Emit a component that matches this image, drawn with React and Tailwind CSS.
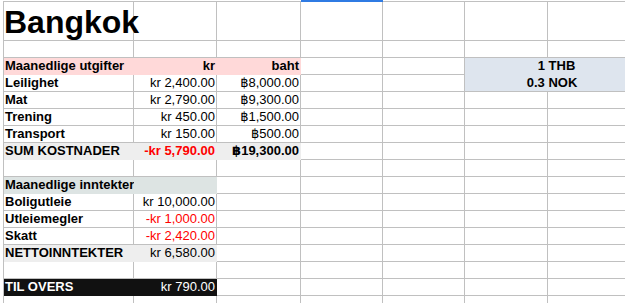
import React from 'react';

// ── helpers ──────────────────────────────────────────────────────────────────

const GRID = 'border-[#c0c0c0]';

const COL_W = [
  'w-[130px]',
  'w-[83px]',
  'w-[84px]',
  'w-[82px]',
  'w-[82px]',
  'w-[83px]',
  'w-[82px]',
];

const FILLS = {
  pink: 'bg-[#ffd9d9] border-[#ffd9d9]',
  gray: 'bg-[#eeeeee] border-[#eeeeee]',
  teal: 'bg-[#dde4e3] border-[#dde4e3]',
  black: 'bg-[#111111] border-[#111111] text-white',
  blue: 'bg-[#dee5ee] border-[#dee5ee]',
};

const ROWS = [
  { cells: [['Maanedlige utgifter', 'b'], ['kr', 'b r'], ['baht', 'b r']], fill: 'pink', span: 3, thb: '1 THB' },
  { cells: [['Leilighet', 'b'], ['kr 2,400.00', 'r'], ['฿8,000.00', 'r']], thb: '0.3 NOK' },
  { cells: [['Mat', 'b'], ['kr 2,790.00', 'r'], ['฿9,300.00', 'r']] },
  { cells: [['Trening', 'b'], ['kr 450.00', 'r'], ['฿1,500.00', 'r']] },
  { cells: [['Transport', 'b'], ['kr 150.00', 'r'], ['฿500.00', 'r']] },
  { cells: [['SUM KOSTNADER', 'b'], ['-kr 5,790.00', 'b r red'], ['฿19,300.00', 'b r']], fill: 'gray', span: 3 },
  { cells: [] },
  { cells: [['Maanedlige inntekter', 'b']], fill: 'teal', span: 2 },
  { cells: [['Boligutleie', 'b'], ['kr 10,000.00', 'r']] },
  { cells: [['Utleiemegler', 'b'], ['-kr 1,000.00', 'r red']] },
  { cells: [['Skatt', 'b'], ['-kr 2,420.00', 'r red']] },
  { cells: [['NETTOINNTEKTER', 'b'], ['kr 6,580.00', 'r']], fill: 'gray', span: 2 },
  { cells: [] },
  { cells: [['TIL OVERS', 'b'], ['kr 790.00', 'r']], fill: 'black', span: 2 },
  { cells: [] },
];

// ── cells ────────────────────────────────────────────────────────────────────

function Cell({ col, text, flags = '', fill }) {
  const bold = flags.includes('b');
  const right = flags.includes('r');
  const red = flags.includes('red');
  return (
    <div
      className={`h-full shrink-0 border-r border-b whitespace-nowrap overflow-visible text-[13px] leading-[16px] ${COL_W[col]} ${
        fill ? FILLS[fill] : GRID
      } ${right ? 'text-right pr-[1px]' : 'text-left pl-[1px]'} ${bold ? 'font-bold' : ''} ${
        red ? 'text-[#ff0000]' : ''
      }`}
    >
      {text}
    </div>
  );
}

function Row({ row }) {
  const cols = [0, 1, 2, 3, 4];
  return (
    <div className="flex h-[17px]">
      {cols.map((c) => {
        const cell = row.cells[c];
        const fill = row.span && c < row.span ? row.fill : null;
        return <Cell key={c} col={c} text={cell?.[0]} flags={cell?.[1]} fill={fill} />;
      })}
      {row.thb ? (
        <div
          className={`h-full w-[165px] shrink-0 border-b font-bold text-[13px] leading-[16px] text-center ${
            row.thb === '1 THB' ? 'bg-[#dee5ee] border-[#dee5ee] pl-[18px]' : 'bg-[#dee5ee] border-[#c0c0c0] pl-[9px]'
          }`}
        >
          {row.thb}
        </div>
      ) : (
        <>
          <Cell col={5} />
          <Cell col={6} />
        </>
      )}
    </div>
  );
}

// ── page ─────────────────────────────────────────────────────────────────────

export default function App() {
  return (
    <div
      className="relative w-[625px] h-[303px] overflow-hidden bg-white text-black pt-px pl-[3px]"
      style={{ fontFamily: '"Liberation Sans", "DejaVu Sans", Arial, sans-serif' }}
    >
      <div className="border-t border-l border-[#c0c0c0] w-max">
        {/* title row */}
        <div className="flex h-[39px]">
          <div className={`h-full shrink-0 border-r border-b ${GRID} ${COL_W[0]} flex items-end whitespace-nowrap`}>
            <span className="relative text-[32px] leading-[36px] font-bold">Bangkok</span>
          </div>
          {[1, 2, 3, 4, 5, 6].map((c) => (
            <Cell key={c} col={c} />
          ))}
        </div>
        <Row row={{ cells: [] }} />
        {ROWS.map((row, i) => (
          <Row key={i} row={row} />
        ))}
      </div>

      {/* selected column marker */}
      <div className="absolute top-0 left-[301px] w-[82px] h-[2px] bg-[#2f7be3]" />
    </div>
  );
}
